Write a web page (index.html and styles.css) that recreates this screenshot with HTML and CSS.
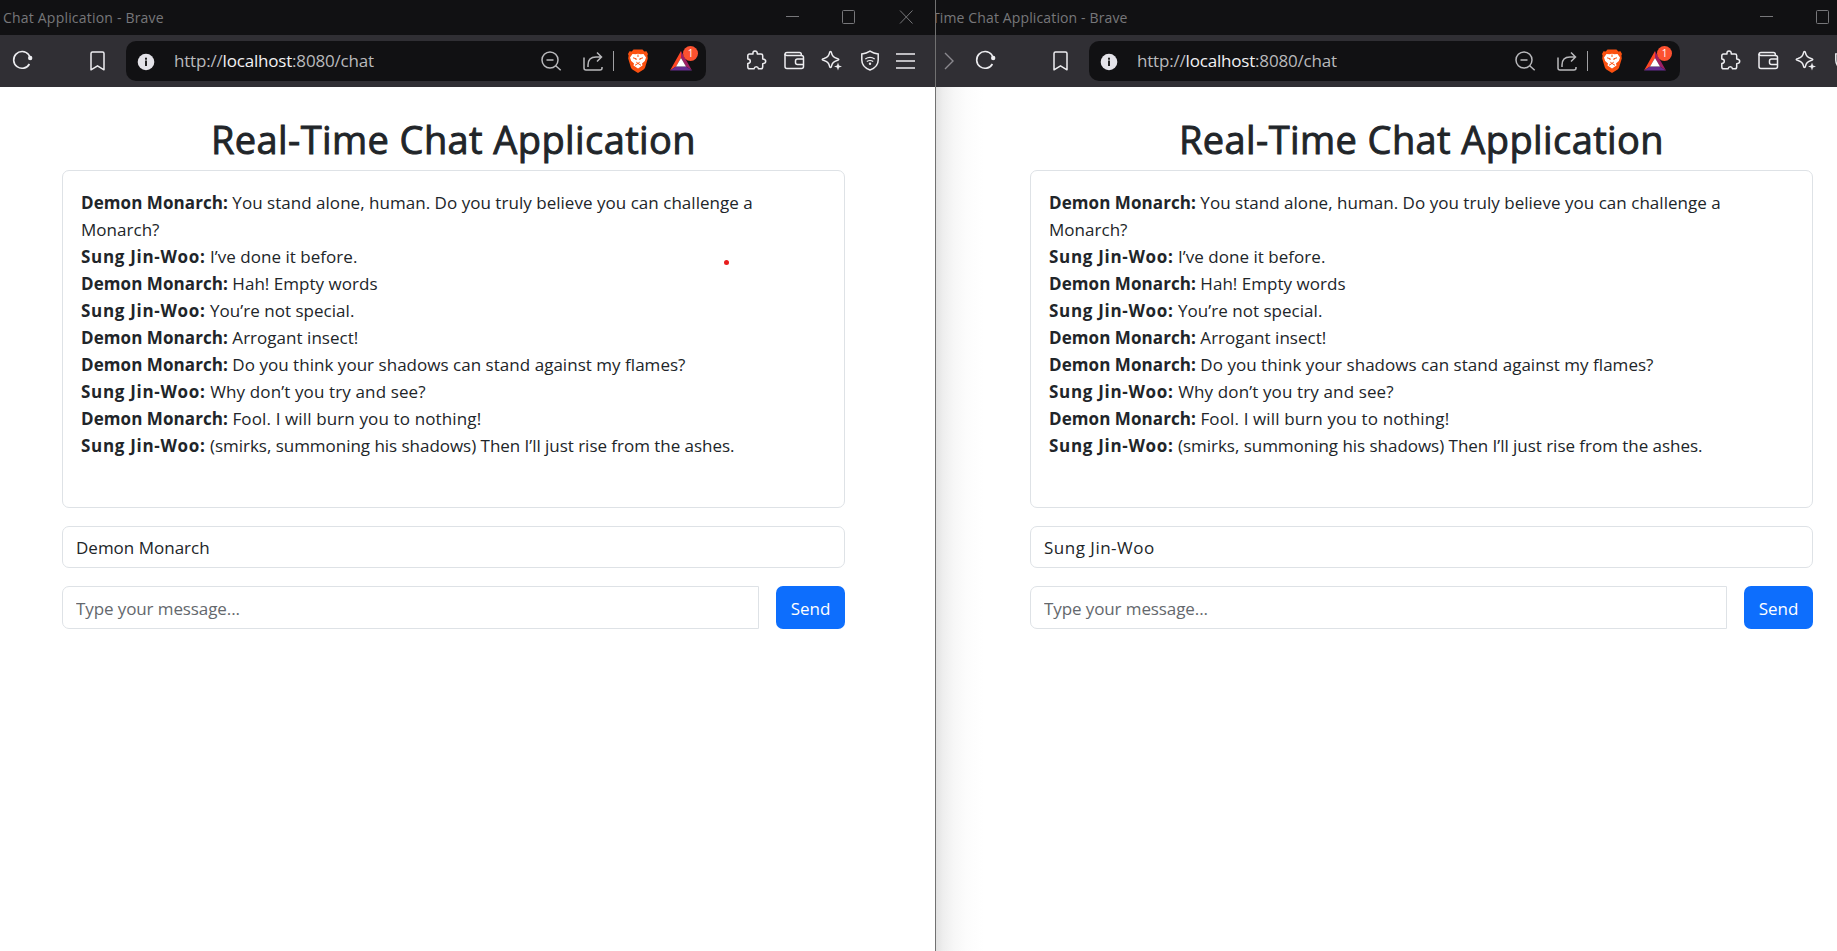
FILE: index.html
```html
<!DOCTYPE html>
<html lang="en"><head><meta charset="utf-8"><title>Chat</title><link rel="stylesheet" href="styles.css"></head>
<body>
<svg class="defs" width="0" height="0">
<symbol id="reload" viewBox="0 0 24 24"><path d="M19.400 16A8.400 8.400 0 1 1 18.600 6.600L20 9" fill="none" stroke="currentColor" stroke-width="1.600"/><circle cx="20.200" cy="10" r="2.200" fill="currentColor"/></symbol>
<symbol id="bookmark" viewBox="0 0 24 24"><path d="M5 4.500Q5 3 6.500 3h10Q18 3 18 4.500V20.800L11.500 16.800 5 20.800Z" fill="none" stroke="currentColor" stroke-width="1.500" stroke-linejoin="round"/></symbol>
<symbol id="info" viewBox="0 0 24 24"><circle cx="12" cy="12" r="8.300" fill="#e4e3e9"/><rect x="11" y="10.500" width="2" height="5.500" fill="#222"/><rect x="11" y="7.700" width="2" height="2" fill="#222"/></symbol>
<symbol id="zoomout" viewBox="0 0 24 24"><g fill="none" stroke="currentColor" stroke-width="1.500"><circle cx="11" cy="11" r="8"/><path d="M7.500 11h7M16.700 16.700l5 4.500"/></g></symbol>
<symbol id="share" viewBox="0 0 24 24"><g fill="none" stroke="currentColor" stroke-width="1.500"><path d="M3 8.500V19q0 2 2 2h14q2 0 2-2v-1"/><path d="M7 18V16q0-8 8-8h5M16 3.500 20.500 8 16 12.500"/></g></symbol>
<symbol id="lion" viewBox="0 0 24 24"><path d="M7.500 .5h9l1.800 2 2.200-.2 1.500 2.700-.6 1.600.4 3-2.700 8.800q-.4 1.200-1.500 2L12 24l-5.600-3.600q-1.100-.8-1.500-2L2.200 9.600l.4-3L2 5 3.500 2.300l2.200.2Z" fill="#fb5010"/><path d="M6.500 5 9.500 5.300 12 4.800 14.500 5.300 17.500 5 20 8.500 18.800 12 16 14.500 16.500 16.500 12 19.500 7.500 16.500 8 14.500 5.200 12 4 8.500Z" fill="#fff"/><path d="M7 8.800 10.300 9.800 9.800 11M17 8.800 13.700 9.800 14.200 11M10.300 13.200 12 14.400 13.700 13.200M9 16.300 12 14.400 15 16.300M12 5.500V8" fill="none" stroke="#fb5010" stroke-width="1"/></symbol>
<symbol id="bat" viewBox="0 0 24 24"><path d="M12 2 1 21.500 7 17.500 12 9Z" fill="#ff4724"/><path d="M12 2 23 21.500 17 17.500 12 9Z" fill="#9e1f63"/><path d="M1 21.500H23L17 17.500H7Z" fill="#662d91"/><path d="M12 9 17 17.500H7Z" fill="#fff"/></symbol>
<symbol id="puzzle" viewBox="0 0 24 24"><path d="M5.500 5H9q-.4-3 2-3t2.300 3H17q1.700 0 1.700 1.700v3.200q3 .2 3 2.400t-3 2.400V18q0 1.800-1.700 1.800H14.500q-.3-2-2.200-2T10 19.800H5.500q-1.700 0-1.700-1.700v-3.600q2.500-.2 2.500-2.200t-2.500-2.200V6.700Q3.800 5 5.500 5Z" fill="none" stroke="currentColor" stroke-width="1.500" stroke-linejoin="round"/></symbol>
<symbol id="wallet" viewBox="0 0 24 24"><g fill="none" stroke="currentColor" stroke-width="1.500"><path d="M3 5.500Q3 3.500 5 3.500H17.500q1.800 0 1.800 1.800v1.200H5Q3 6.500 3 5"/><path d="M3 5V17.500q0 2 2 2H19.500q2 0 2-2V8.500q0-2-2-2"/><path d="M21.500 10H15.500q-2 0-2 2v1.500q0 2 2 2h6"/></g></symbol>
<symbol id="sparkle" viewBox="0 0 24 24"><path d="M10.500 2.500q.8 0 1 1.300.8 4.400 5.600 5.600 1.700.4 1.700 1.100t-1.700 1.100q-4.800 1.200-5.600 5.600-.2 1.300-1 1.300t-1-1.300Q8.700 12.800 4 11.600 2.200 11.200 2.200 10.500T4 9.400q4.700-1.200 5.500-5.600Q9.700 2.500 10.500 2.500Z" fill="none" stroke="currentColor" stroke-width="1.500"/><path d="m18 13.500 1 3 3 1-3 1-1 3-1-3-3-1 3-1Z" fill="currentColor"/></symbol>
<symbol id="vpn" viewBox="0 0 24 24"><g fill="none" stroke="currentColor" stroke-width="1.500"><path d="M12 2.200q3.500 2.400 8.200 2.800v6q0 7-8.200 10Q3.800 18 3.800 11V5Q8.500 4.600 12 2.200Z"/><path stroke-width="1.200" d="M7.300 10q4.700-3.200 9.400 0M8.800 12.600q3.200-2.200 6.400 0"/></g><circle cx="12" cy="14.800" r="1.200" fill="currentColor"/></symbol>
</svg>
<div class="desktop">
<section class="window left">
<header class="titlebar"><span class="title">Chat Application - Brave</span><svg class="controls" width="128" height="15"><g fill="none" stroke="currentColor" stroke-width="1"><path d="M0 6.500h13M114 .5l12.500 13M126.500 .5l-12.500 13"/><rect x="56.500" y=".5" width="12" height="13" rx="1"/></g></svg></header>
<nav class="toolbar"><svg class="i reload"><use href="#reload"/></svg><svg class="i bookmark"><use href="#bookmark"/></svg>
<div class="address"><svg class="i info"><use href="#info"/></svg><span class="url">http://<b>localhost</b>:8080/chat</span><svg class="i zoomout"><use href="#zoomout"/></svg><svg class="i share"><use href="#share"/></svg><i class="sep"></i><svg class="i lion"><use href="#lion"/></svg><span class="rewards"><svg class="i"><use href="#bat"/></svg><em>1</em></span></div>
<div class="tools"><svg class="i"><use href="#puzzle"/></svg><svg class="i"><use href="#wallet"/></svg><svg class="i"><use href="#sparkle"/></svg><svg class="i"><use href="#vpn"/></svg><svg class="menu" width="19" height="16"><path d="M0 1h19M0 8h19M0 15h19" stroke="currentColor" stroke-width="1.500"/></svg></div></nav>
<main class="page"><h1><span>Real-Time Chat Application</span></h1>
<div class="chat">
<p><strong>Demon Monarch:</strong> You stand alone, human. Do you truly believe you can challenge a<br>Monarch?</p>
<p class="s"><strong>Sung Jin-Woo:</strong> I’ve done it before.</p>
<p><strong>Demon Monarch:</strong> Hah! Empty words</p>
<p class="s"><strong>Sung Jin-Woo:</strong> You’re not special.</p>
<p><strong>Demon Monarch:</strong> Arrogant insect!</p>
<p><strong>Demon Monarch:</strong> Do you think your shadows can stand against my flames?</p>
<p class="s wide"><strong>Sung Jin-Woo:</strong> Why don’t you try and see?</p>
<p class="wide"><strong>Demon Monarch:</strong> Fool. I will burn you to nothing!</p>
<p class="s tight"><strong>Sung Jin-Woo:</strong> (smirks, summoning his shadows) Then I’ll just rise from the ashes.</p>
<i class="pointer"></i></div>
<input class="name" value="Demon Monarch"><div class="compose"><input placeholder="Type your message..."><button>Send</button></div></main>
</section>
<section class="window right">
<header class="titlebar"><span class="title">Time Chat Application - Brave</span><svg class="controls" width="128" height="15"><g fill="none" stroke="currentColor" stroke-width="1"><path d="M0 6.500h13"/><rect x="56.500" y=".5" width="12" height="13" rx="1"/></g></svg></header>
<nav class="toolbar"><svg class="forward" width="10" height="18"><path d="m1 1 8 8-8 8" fill="none" stroke="currentColor" stroke-width="1.400"/></svg><svg class="i reload"><use href="#reload"/></svg><svg class="i bookmark"><use href="#bookmark"/></svg>
<div class="address"><svg class="i info"><use href="#info"/></svg><span class="url">http://<b>localhost</b>:8080/chat</span><svg class="i zoomout"><use href="#zoomout"/></svg><svg class="i share"><use href="#share"/></svg><i class="sep"></i><svg class="i lion"><use href="#lion"/></svg><span class="rewards"><svg class="i"><use href="#bat"/></svg><em>1</em></span></div>
<div class="tools"><svg class="i"><use href="#puzzle"/></svg><svg class="i"><use href="#wallet"/></svg><svg class="i"><use href="#sparkle"/></svg><svg class="i"><use href="#vpn"/></svg></div></nav>
<main class="page"><h1><span>Real-Time Chat Application</span></h1>
<div class="chat">
<p><strong>Demon Monarch:</strong> You stand alone, human. Do you truly believe you can challenge a<br>Monarch?</p>
<p class="s"><strong>Sung Jin-Woo:</strong> I’ve done it before.</p>
<p><strong>Demon Monarch:</strong> Hah! Empty words</p>
<p class="s"><strong>Sung Jin-Woo:</strong> You’re not special.</p>
<p><strong>Demon Monarch:</strong> Arrogant insect!</p>
<p><strong>Demon Monarch:</strong> Do you think your shadows can stand against my flames?</p>
<p class="s wide"><strong>Sung Jin-Woo:</strong> Why don’t you try and see?</p>
<p class="wide"><strong>Demon Monarch:</strong> Fool. I will burn you to nothing!</p>
<p class="s tight"><strong>Sung Jin-Woo:</strong> (smirks, summoning his shadows) Then I’ll just rise from the ashes.</p>
</div>
<input class="name" value="Sung Jin-Woo"><div class="compose"><input placeholder="Type your message..."><button>Send</button></div></main>
</section>
</div></body></html>
```
FILE: styles.css
```css
* { box-sizing: border-box; }
body { margin: 0; background: #fff; font-family: "Open Sans", "Noto Sans", sans-serif; color: #212529; overflow: hidden; }
.defs { position: absolute; }
.desktop { display: flex; width: 1837px; height: 951px; overflow: hidden; }
.window { height: 951px; overflow: hidden; flex: none; }
.left { width: 936px; border-right: 1px solid #717171; }
.right { width: 901px; }
.right .page { background: linear-gradient(90deg, #e2e2e2 0, #eee 7px, #f7f7f7 18px, #fcfcfc 30px, #fff 48px); }
.titlebar { height: 35px; background: #111113; color: #77777a; display: flex; align-items: center; justify-content: space-between; }
.title { font-size: 14px; line-height: 20px; padding: 1px 0 0 3px; white-space: nowrap; letter-spacing: 0.2px; }
.right .title { padding-left: 0; margin-left: -4px; letter-spacing: 0.13px; }
.controls { margin-right: 21px; flex: none; }
.right .controls { margin-right: -51px; }
.toolbar { height: 52px; background: #302f34; color: #ededf0; display: flex; align-items: center; }
.i { width: 24px; height: 24px; display: block; flex: none; }
.toolbar > .reload { margin-left: 10px; margin-bottom: 2px; }
.toolbar > .bookmark { margin-left: 52px; margin-bottom: 1px; }
.forward { margin-left: 8px; color: #8a898e; flex: none; }
.right .toolbar > .reload { margin-left: 19px; }
.address { width: 580px; height: 40px; border-radius: 10px; background: #111113; color: #b9b9bc; margin-left: 16px; display: flex; align-items: center; flex: none; padding-left: 8px; }
.right .address { width: 591px; }
.address .info { margin-top: 2px; }
.url { font-size: 17px; width: 381px; padding: 0 0 2px 16px; white-space: nowrap; flex: none; letter-spacing: -0.19px; }
.right .url { width: 392px; }
.url b { font-weight: 400; color: #f2f2f4; }
.share { margin-left: 18px; }
.sep { width: 1px; height: 20px; background: #a0a0a3; margin-left: 8px; }
.lion { margin-left: 12px; }
.rewards { position: relative; margin-left: 19px; }
.rewards em { position: absolute; left: 14px; top: -3px; width: 15px; height: 15px; border-radius: 8px; background: #fc5130; color: #fff; font: 10px/15px "Open Sans", sans-serif; text-align: center; }
.tools { display: flex; align-items: center; gap: 14px; margin-left: 38px; flex: none; }
.page { height: 864px; padding: 28px 90px 0 62px; }
.right .page { padding: 28px 24px 0 94px; }
h1 { margin: 0; height: 55px; text-align: center; font-size: 38px; line-height: 48px; font-weight: 400; letter-spacing: 0.4px; -webkit-text-stroke: 0.9px #212529; white-space: nowrap; }
.chat { height: 338px; border: 1px solid #dee2e6; border-radius: 7px; padding: 18px; position: relative; font-size: 17px; line-height: 27px; white-space: nowrap; letter-spacing: 0.03px; }
.chat p { margin: 0; }
.chat strong { letter-spacing: 0.07px; }
.chat .s strong { letter-spacing: 0.7px; }
.chat .wide { letter-spacing: 0.13px; }
.chat .tight { letter-spacing: -0.03px; }
.pointer { position: absolute; left: 661px; top: 89px; width: 5px; height: 5px; border-radius: 50%; background: #e81d1d; }
input { display: block; width: 100%; height: 42px; border: 1px solid #dee2e6; border-radius: 7px; padding: 0 13px; font: 17px/27px "Open Sans", sans-serif; color: #212529; background: #fff; outline: 0; }
.name { margin-top: 18px; }
.right .name { letter-spacing: 0.5px; padding-top: 1px; }
.compose { display: flex; gap: 17px; margin-top: 18px; }
.compose input { width: 697px; height: 43px; border-radius: 7px 0 0 7px; padding-top: 1px; letter-spacing: -0.1px; }
input::placeholder { color: #64686d; opacity: 1; }
button { width: 69px; height: 43px; border: 0; border-radius: 7px; background: #0d6efd; color: #fff; font: 17px/27px "Open Sans", sans-serif; padding: 1px 0 0; }
```
